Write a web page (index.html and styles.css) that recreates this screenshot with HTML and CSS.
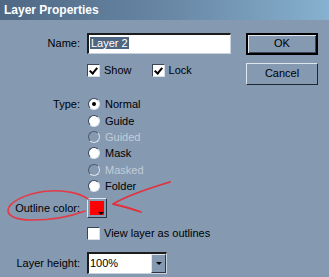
FILE: index.html
```html
<!DOCTYPE html>
<html>
<head>
<meta charset="utf-8">
<link rel="stylesheet" href="styles.css">
</head>
<body>
<div class="dialog">
  <div class="titlebar">Layer Properties</div>
  <div class="content">
    <div class="form">
      <div class="row row-name">
        <div class="label">Name:</div>
        <div class="ctrl"><div class="textbox"><span class="sel">Layer 2</span></div></div>
      </div>
      <div class="row row-show">
        <div class="label"></div>
        <div class="ctrl checks">
          <span class="check"><span class="box on"></span>Show</span>
          <span class="check lock"><span class="box on"></span>Lock</span>
        </div>
      </div>
      <div class="row row-type">
        <div class="label">Type:</div>
        <div class="ctrl radios">
          <div class="radio"><span class="dot on"></span>Normal</div>
          <div class="radio"><span class="dot"></span>Guide</div>
          <div class="radio disabled"><span class="dot"></span>Guided</div>
          <div class="radio"><span class="dot"></span>Mask</div>
          <div class="radio disabled"><span class="dot"></span>Masked</div>
          <div class="radio"><span class="dot"></span>Folder</div>
        </div>
      </div>
      <div class="row row-color">
        <div class="label">Outline color:</div>
        <div class="ctrl"><div class="swatch"><span class="arrow"></span></div></div>
      </div>
      <div class="row row-view">
        <div class="label"></div>
        <div class="ctrl"><span class="check"><span class="box"></span>View layer as outlines</span></div>
      </div>
      <div class="row row-height">
        <div class="label">Layer height:</div>
        <div class="ctrl"><div class="select"><span class="val">100%</span><span class="dd"><span class="tri"></span></span></div></div>
      </div>
    </div>
    <div class="buttons">
      <div class="btn default">OK</div>
      <div class="btn">Cancel</div>
    </div>
  </div>
  <svg class="annot" width="329" height="277" viewBox="0 0 329 277">
    <path d="M88 199 C 80 193, 64 190, 50 191 C 32 192, 14 199, 9 207 C 5 215, 14 220, 32 220 C 52 220, 72 216, 85 211" fill="none" stroke="#e33a46" stroke-width="1.6" stroke-linecap="round"/>
    <path d="M170 182 C 150 188, 128 195, 113 204 C 122 206, 132 209, 141 212" fill="none" stroke="#e3303c" stroke-width="1.8" stroke-linecap="round" stroke-linejoin="round"/>
  </svg>
</div>
</body>
</html>
```
FILE: styles.css
```css
html, body { margin: 0; padding: 0; }
body {
  width: 329px; height: 277px; overflow: hidden;
  background: #8599b1;
  font-family: Tahoma, "Liberation Sans", sans-serif;
  font-size: 11px; color: #000;
}
.dialog { position: relative; width: 329px; height: 277px; }
.titlebar {
  height: 20px; box-sizing: border-box; padding: 3px 0 0 4px;
  background: linear-gradient(to right, #4f6884 0%, #6a8aa8 55%, #86b1cf 100%);
  color: #fff; font-weight: bold; font-size: 12px; line-height: 14px;
  font-family: "Liberation Sans", sans-serif;
}
.content { display: flex; padding-top: 13px; }
.form { width: 246px; }
.buttons { display: flex; flex-direction: column; gap: 8px; padding-top: 0; }
.row { display: flex; }
.label { width: 80px; text-align: right; padding-right: 7px; flex: none; }
.ctrl { flex: none; }
.row-name .label { line-height: 21px; }
.textbox {
  width: 144px; height: 21px; box-sizing: border-box;
  background: #fff;
  border-top: 2px solid #1c1c1c; border-left: 2px solid #1c1c1c;
  border-right: 1px solid #c8d2dd; border-bottom: 1px solid #c8d2dd;
  padding: 1px 0 0 1px; line-height: 15px;
}
.sel { background: #4e6682; color: #fff; padding: 0 1px; }
.row-show { margin-top: 9px; }
.checks { display: flex; }
.check { display: flex; align-items: center; line-height: 15px; }
.lock { margin-left: 20px; }
.box {
  width: 13px; height: 13px; box-sizing: border-box; background: #fff; margin-right: 4px;
  border-top: 1px solid #3a4656; border-left: 1px solid #3a4656;
  border-right: 1px solid #d6dee8; border-bottom: 1px solid #d6dee8;
  position: relative; flex: none;
}
.box.on::after {
  content: ""; position: absolute; left: 2px; top: 1px; width: 3px; height: 6px;
  border-right: 2px solid #000; border-bottom: 2px solid #000;
  transform: translate(1px,0) rotate(40deg);
}
.row-type { margin-top: 18px; }
.row-type .label { line-height: 16px; }
.radios { display: flex; flex-direction: column; }
.radio { display: flex; align-items: center; height: 16.4px; }
.dot {
  width: 12px; height: 12px; box-sizing: border-box; border-radius: 50%;
  background: #fff; margin-right: 5px; margin-left: 1px;
  border: 1px solid; border-color: #38455a #dce4ec #dce4ec #38455a;
  position: relative; flex: none;
}
.dot.on::after {
  content: ""; position: absolute; left: 3px; top: 3px; width: 4px; height: 4px;
  border-radius: 50%; background: #000;
}
.radio.disabled { color: #c3ccd8; }
.radio.disabled .dot { background: transparent; border-color: #4b5a6c #dce4ec #dce4ec #4b5a6c; }
.row-color { margin-top: 4px; }
.row-color .label { line-height: 20px; }
.swatch {
  width: 20px; height: 20px; box-sizing: border-box; position: relative;
  border: 1px solid; border-color: #dfe6ee #2a3442 #2a3442 #dfe6ee;
  background: #8599b1; padding: 2px;
}
.swatch::before { content: ""; display: block; width: 14px; height: 14px; background: #ff0000; }
.swatch .arrow {
  position: absolute; right: 2px; bottom: 2px; width: 0; height: 0;
  border-left: 3px solid transparent; border-right: 3px solid transparent; border-top: 3px solid #000;
}
.row-view { margin-top: 8px; }
.row-height { margin-top: 11px; }
.row-height .label { line-height: 22px; }
.select {
  width: 80px; height: 22px; box-sizing: border-box; background: #fff; display: flex;
  border-top: 2px solid #1c1c1c; border-left: 2px solid #1c1c1c;
  border-right: 1px solid #c8d2dd; border-bottom: 1px solid #c8d2dd;
}
.val { flex: 1; line-height: 18px; padding-left: 1px; }
.dd {
  width: 15px; box-sizing: border-box; background: #8599b1; display: flex; align-items: center; justify-content: center;
  border: 1px solid; border-color: #dfe6ee #2a3442 #2a3442 #dfe6ee;
}
.tri { width: 0; height: 0; border-left: 3px solid transparent; border-right: 3px solid transparent; border-top: 3px solid #000; }
.btn {
  width: 72px; height: 22px; box-sizing: border-box; text-align: center; line-height: 19px;
  border: 1px solid; border-color: #dfe6ee #1e2632 #1e2632 #dfe6ee;
}
.btn.default { border-width: 2px; border-color: #000; box-shadow: inset 1px 1px 0 #dfe6ee, inset -1px -1px 0 #3a4656; line-height: 17px; }
.annot { position: absolute; left: 0; top: 0; pointer-events: none; }
```
